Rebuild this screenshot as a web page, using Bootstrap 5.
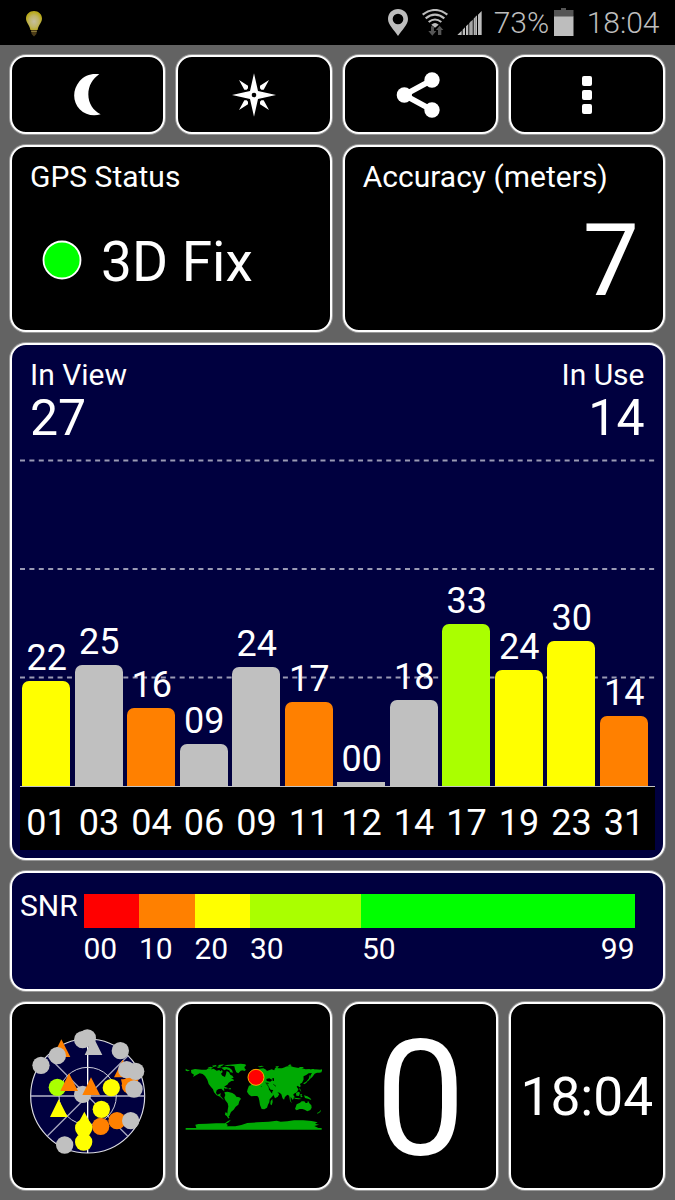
<!DOCTYPE html>
<html lang="en">
<head>
<meta charset="utf-8">
<meta name="viewport" content="width=device-width, initial-scale=1">
<title>GPS Test</title>
<link href="https://cdn.jsdelivr.net/npm/bootstrap@5.3.0/dist/css/bootstrap.min.css" rel="stylesheet">
<style>
body{font-family:Roboto,"Liberation Sans",sans-serif;background:#636363;color:#fff;width:675px;height:1200px;overflow:hidden}
svg{display:block;flex:none}
.status{height:45px;background:#000;color:#bdbdbd;padding:0 15.5px 0 26px}
.status span{font-size:30px;line-height:46px;font-weight:300}
.board{padding:10px 10.5px 10px 10px;gap:11px}
.tiles{display:grid;grid-template-columns:repeat(4,1fr);gap:11px}
.halves{display:grid;grid-template-columns:1fr 1fr;gap:11px}
.pane{background:#000;border:2px solid #fff;border-radius:16px;box-shadow:0 0 0 1px rgba(255,255,255,.35)}
.navy{background:#00003f}
.h-tool{height:79px}.h-info{height:187px}.h-chart{height:517px}.h-snr{height:120px}.h-foot{height:188px}
.cap{font-size:30px;line-height:36px}
.fix{font-size:55px;line-height:62px}
.acc{font-size:100px;line-height:100px}
.cnt{font-size:50px;line-height:51px}
.stack{display:grid}
.stack>*{grid-area:1/1}
.chart{height:330px;margin:0 8px;width:635px}
.bars{padding-left:2.3px;gap:4.5px;height:329px}
.sat{width:48px}
.sat span{font-size:36px;line-height:36px;margin-bottom:5px;padding-left:1px}
.sat i{width:48px;border-radius:7px 7px 0 0}
.ids{background:#000;border-top:1.5px solid #c4c4c4;height:64px;width:635px;margin-left:8px;padding-left:2px;gap:4.5px;position:relative}
.ids span{width:48px;font-size:36px;line-height:72px;padding-left:1px;text-align:center}
.y{background:#ff0}.g{background:#c0c0c0}.o{background:#ff8000}.l{background:#af0}
.scale{height:34px;width:551px}
.scale i{height:34px}
.ticks{width:551px;margin-left:71.5px;font-size:30px;line-height:36px}
.speed{font-size:161px;line-height:190px}
.clock{font-size:53.3px;line-height:187px}
</style>
</head>
<body>
<header class="status d-flex align-items-start">
  <svg class="me-auto" style="margin-top:10px" width="16" height="27" viewBox="0 0 16 27">
    <defs><radialGradient id="glow" cx=".5" cy=".55"><stop offset="0" stop-color="#c6bfa0"/><stop offset=".6" stop-color="#c0b565"/><stop offset="1" stop-color="#b8a91c"/></radialGradient></defs>
    <path d="M8 1C3.500 1 0 4.300 0 8.500c0 4 3.400 6 4.400 11.500h7.200C12.600 14.500 16 12.500 16 8.500 16 4.300 12.500 1 8 1z" fill="url(#glow)"/>
    <path d="M5 20h6l-.6 4L8 26.500 5.600 24z" fill="#4c3c18"/><path d="M5.200 21.500h5.600" stroke="#8a7a3a"/>
  </svg>
  <svg style="margin-top:9px" width="20" height="27" viewBox="159 27 60 81"><path fill="#bdbdbd" fill-rule="evenodd" d="M189 27c-17 0-30 13-30 30 0 18 18 32 30 51 12-19 30-33 30-51 0-17-13-30-30-30zm0 14a16 16 0 1 1 0 32 16 16 0 0 1 0-32z"/></svg>
  <svg style="margin:9px 0 0 13.500px" width="26" height="27" viewBox="260 27 78 81"><g fill="none" stroke="#bdbdbd" stroke-width="6.500"><path d="M262 44Q299 16 336 44"/><path d="M271 55Q299 33 327 55"/><path d="M280 66Q299 51 318 66"/></g><path d="M288 74q11-10 22 0l-11 9z" fill="#bdbdbd"/><path d="M287 79h9v14h7l-12 14-12-14h8zM308 105v-15h-6l11-13 11 13h-6v15z" fill="#555"/></svg>
  <svg style="margin:11px 0 0 9.500px" width="26" height="24" viewBox="365 33 78 72"><path fill="#bdbdbd" d="M366 105l13-13v13zM382 89l7-7v23h-7zM392 79l7-7v33h-7zM402 69l10-10v46h-10zM415 56l10-10v59h-10zM428 44l11-11v72h-11z"/><path d="M407 63v42M420 50v55" stroke="#777" stroke-width="2"/></svg>
  <span style="margin-left:10.500px">73%</span>
  <svg style="margin:7px 0 0 4.500px" width="20" height="29" viewBox="0 0 20 29"><path fill="#555" d="M7 1h5v2h7.500v7H0V3h7z"/><path fill="#bdbdbd" d="M0 9.500h19.500V29H0z"/></svg>
  <span style="margin-left:13px">18:04</span>
</header>

<main class="board d-flex flex-column">
  <div class="tiles">
    <button class="pane h-tool p-0 d-flex align-items-center justify-content-center" aria-label="Night mode"><svg width="28" height="44" viewBox="221 219 84 132"><path fill="#fff" d="M297 223C275 219 252 226 238 243c-22 26-22 62 0 85 17 17 41 22 63 15-23-11-37-33-37-60 0-25 13-48 33-60z"/></svg></button>
    <button class="pane h-tool p-0 d-flex align-items-center justify-content-center" aria-label="Compass"><svg width="44" height="44" viewBox="696 218 132 132"><path fill="#fff" fill-rule="evenodd" d="M762 219l12 53 54 12-54 12-12 53-12-53-54-12 54-12zM762 277a7 7 0 1 0 0 14 7 7 0 0 0 0-14z"/><path fill="#fff" d="M717 239l27 17v8l-4 4h-7zM807 239l-27 17v8l4 4h7zM717 329l27-17v-8l-4-4h-7zM807 329l-27-17v-8l4-4h7z"/></svg></button>
    <button class="pane h-tool p-0 d-flex align-items-center justify-content-center" aria-label="Share"><svg style="margin-right:5px" width="44" height="46" viewBox="182 215 132 138"><path d="M290 239l-83 45 83 45" fill="none" stroke="#fff" stroke-width="17"/><g fill="#fff"><circle cx="290" cy="239" r="23"/><circle cx="207" cy="284" r="23"/><circle cx="290" cy="329" r="23"/></g></svg></button>
    <button class="pane h-tool p-0 d-flex align-items-center justify-content-center" aria-label="Menu"><svg style="margin-left:1px" width="10" height="38" viewBox="0 0 10 38"><g fill="#fff"><rect width="10" height="10" rx="2"/><rect y="14" width="10" height="10" rx="2"/><rect y="28" width="10" height="10" rx="2"/></g></svg></button>
  </div>

  <div class="halves">
    <section class="pane h-info">
      <div class="cap" style="padding:12px 0 0 18px">GPS Status</div>
      <div class="d-flex align-items-start" style="padding:36px 0 0 30px"><svg style="margin-top:9px" width="40" height="40" viewBox="0 0 40 40"><circle cx="20" cy="20" r="18.500" fill="#0f0" stroke="#fff" stroke-width="1.800"/></svg><span class="fix" style="margin-left:19px">3D Fix</span></div>
    </section>
    <section class="pane h-info">
      <div class="cap" style="padding:12px 0 0 18px">Accuracy (meters)</div>
      <div class="acc text-end" style="padding:16px 23.500px 0 0">7</div>
    </section>
  </div>

  <section class="pane navy h-chart">
    <div class="d-flex justify-content-between" style="padding:12px 18px 0">
      <div><div class="cap">In View</div><div class="cnt">27</div></div>
      <div class="text-end"><div class="cap">In Use</div><div class="cnt">14</div></div>
    </div>
    <div class="stack chart" style="margin-top:14px">
      <svg width="635" height="328"><g stroke="#9a9ab4" stroke-width="1.800" stroke-dasharray="5 4.390"><path d="M0 2.500H635M0 111H635M0 219.500H635"/></g></svg>
      <div class="bars d-flex align-items-end" id="bars"></div>
    </div>
    <div class="ids d-flex" id="ids" style="margin-top:-2px"></div>
  </section>

  <section class="pane navy h-snr">
    <div class="d-flex" style="padding:20.500px 0 0 8px">
      <div class="cap" style="width:63.500px;margin-top:-6px">SNR</div>
      <div class="scale d-flex"><i style="width:55.500px;background:#f00"></i><i class="o" style="width:55.500px"></i><i class="y" style="width:55.500px"></i><i class="l" style="width:111px"></i><i class="flex-fill" style="background:#0f0"></i></div>
    </div>
    <div class="ticks d-flex" style="margin-top:3.500px"><span style="width:55.500px">00</span><span style="width:55.500px">10</span><span style="width:55.500px">20</span><span style="width:112px">30</span><span>50</span><span class="ms-auto">99</span></div>
  </section>

  <div class="tiles">
    <section class="pane h-foot">
      <svg width="151" height="184" viewBox="36 12 453 552">
        <circle cx="263" cy="288" r="171" fill="#00003f" stroke="#dcdce4" stroke-width="3.500"/>
        <g fill="none" stroke="#a5a5bd" stroke-width="4"><path d="M142 167l241 241M384 167L142 408"/><path d="M92 288h342" stroke="#b5b5c8" stroke-width="5"/><path d="M263 117v342" stroke="#fff"/><circle cx="263" cy="288" r="86" stroke="#ccccd8" stroke-width="3"/></g>
        <path fill="#ff8000" d="M184 118l27 53h-53z"/>
        <g fill="#c0c0c0"><circle cx="262" cy="114" r="26"/><circle cx="248" cy="119" r="26"/><path d="M280 111l27 54h-53z"/><circle cx="361" cy="152" r="26"/><circle cx="172" cy="167" r="26"/><circle cx="123" cy="196" r="26"/><circle cx="248" cy="283" r="26"/></g>
        <path fill="#ff8000" d="M368 179l27 53h-53z"/><circle cx="391" cy="256" r="26" fill="#ff8000"/>
        <path d="M363 238h54l-14 18h-36z" fill="#ff8000"/>
        <g fill="#c0c0c0"><circle cx="380" cy="209" r="26"/><circle cx="407" cy="214" r="26"/><circle cx="402" cy="267" r="26"/></g>
        <circle cx="172" cy="262" r="26" fill="#af0"/>
        <path fill="#ff8000" d="M207 220l27 53h-53zM273 232l27 53h-53z"/>
        <g fill="#ff0"><circle cx="334" cy="263" r="26"/><circle cx="304" cy="328" r="26"/><path d="M176 298l27 53h-53zM253 335l25 47h-50z"/></g>
        <g fill="#ff8000"><circle cx="302" cy="379" r="26"/><circle cx="351" cy="362" r="26"/></g>
        <g fill="#ff0"><circle cx="251" cy="384" r="26"/><circle cx="251" cy="426" r="26"/></g>
        <circle cx="392" cy="362" r="26" fill="#c0c0c0"/><circle cx="194" cy="435" r="26" fill="#c0c0c0"/>
      </svg>
    </section>
    <section class="pane h-foot">
      <svg width="151" height="184" viewBox="24 12 453 552">
        <g fill="#00aa04">
          <path d="M63 210l12-3 20 2h14l6-4 10 3 6-2 9 6 8-2 3 4 5-4 2 6-5 5 4 6 8 4 3-9 2-9 7 4 4 7 6 3 4 6-8 3 7 2 2 4-8 1-8 5-4 6-8 5-2 6 1 9-5-4-4-4-8 1-6 4-2 8 4 5 6-2 4-3-1 9 4 4 4 5 5 2-6-1-8-8-10-4-8-9-3-9-6-7-7-9-4-13-7-11-7-6-9-2-11 6-9 5 3-7-8-5z"/>
          <path d="M47 206l5 3 8 2-7 3-6-2zM113 203l8-3 9 3-8 4zM126 197l12-2 2 4-10 2zM140 201l10-3 5 4-10 2zM145 195l17-2-6 5-10 1zM154 203l12-3 12 3 8 7 3 8-8-1-3-6-9-3-6 3zM162 196l16-2 17-1 17-2 14 2 2 4-5 4 2 6-6 4-7 1-7 8-6-3-4-9-2-9-11-2-10 1z"/>
          <path d="M217 208l7-1 5 2-6 4-5-2zM157 262l9-1 9 4-8 1zM176 265h7v3h-7zM163 277l9-2 7 2 8 2 8 5 4 6 9 2 5 4-5 8-3 10-8 6-6 9-8 7-3 7-2 5-3 0 3 4-1 4-6-6 1-9 1-11 2-11-2-9-7-9-3-8 3-8z"/>
          <path d="M166 337l6 2 1 7 4 3-7-1-5-4zM302 303l5-6 1 9-3 10-4-3z"/>
          <path d="M237 257l10-3 13-1 4 5 12 2 3-3 12 1 7 12 7 10 8-1-5 9-9 10-1 9-4 7-3 9-8 5-8-1-5-12-2-13-2-9-4-5-9 0-9 1-7-5-6-9 2-8z"/>
          <path transform="translate(23.500 0) scale(.9 1)" d="M237 243l7-1 6-5-3-6 8-7 8-4 0-8 10-6 12-1 9 4 3 4 16-5 8 3 7-7 10 1 9 0 14-5 14-2 10 3 13 2 14 1 14 4 12-1 13 3 12-1 16 1v7l-7 1-8 0-8 3-7 9-7 6 0-9 5-8-11 1-8 5-9 4 0 10-5 9-7 4 3 7-5 3-5-5-4 3 6 8-5 9-10 4-3 5 3 8-4 6-7-10 0 11 4 9-6-7-3-16-6-3-8 7-3 8-5-4-4-12-6-5-7-1 6 6-5 7-9 5-5-9-5-9 4-7-9-1-5-4-5 5-3-7-7-5 5 9-6 1-9-9-8 6-4 8-10 2z"/>
          <path d="M263 200l12-3 7 2-12 3zM312 209l6-7 8-2-6 6zM317 198h9v2h-9zM345 200l8-2 7-5 5 3-6 3zM388 201h12v3h-12zM424 207h8v3h-8zM419 225l4 8-5 6-4 5-7 2 4-4 6-7zM400 250l7-4 5-2-3 5-7 4zM362 277l6 6 6 8-2 2-9-8zM373 293l14 2 8 2-9 1-12-2zM378 280l7-5 5 3-3 10-8-1zM391 282l6 0-3 3 4 6-6 1zM387 263l4 5 3 8-5-7zM402 286l10 3 9 6 3 5-10-4-9-2z"/>
          <path d="M430 208l20 1 6-1v6l-20 3zM380 313l10-5 5-4 8 0 4 5 5 0 2-7 4 8 6 6 1 7-4 7-9 4-8-5-7-2-8 0-9 4-5-4z"/><path d="M441 339l6-3 6-7-2 7-8 5z"/><path d="M344 269l3 4-2 3z"/>
          <path d="M79 384L76 374 85 372 110 371 138 370 165 370 173 364 183 359 176 367 168 371 174 375 170 379 196 379 214 375 232 369 262 367 296 365 320 362 332 365 352 364 372 361 400 361 425 363 443 367 435 371 447 374 433 378 445 384z"/>
          <path d="M47 384h408v5H47z"/>
        </g>
        <path d="M289 237l9-2 9 5-6 5-11-2zM307 234l5 1 0 8-4-1zM284 248h10l3 4-9-2z" fill="#000"/>
        <path d="M289 250l6 9 6 12M310 253l8 6" stroke="#000" stroke-width="2" fill="none"/>
        <circle cx="258" cy="232" r="24" fill="#f00" stroke="#ffb000" stroke-width="3"/>
      </svg>
    </section>
    <section class="pane h-foot text-center speed">0</section>
    <section class="pane h-foot text-center clock">18:04</section>
  </div>
</main>
<script src="https://cdn.jsdelivr.net/npm/bootstrap@5.3.0/dist/js/bootstrap.bundle.min.js"></script>
<script>
// satellite id, signal-to-noise ratio, bar height, colour class
const sats=[["01","22",106,"y"],["03","25",122,"g"],["04","16",79,"o"],["06","09",43,"g"],["09","24",120,"g"],["11","17",85,"o"],["12","00",5,"g"],["14","18",87,"g"],["17","33",163,"l"],["19","24",117.5,"y"],["23","30",146,"y"],["31","14",71,"o"]];
document.getElementById("bars").innerHTML=sats.map(([id,snr,h,c])=>`<div class="sat d-flex flex-column align-items-center"><span>${snr}</span><i class="${c}" style="height:${h}px${h<8?";border-radius:0":""}"></i></div>`).join("");
document.getElementById("ids").innerHTML=sats.map(s=>`<span>${s[0]}</span>`).join("");
</script>
</body>
</html>
